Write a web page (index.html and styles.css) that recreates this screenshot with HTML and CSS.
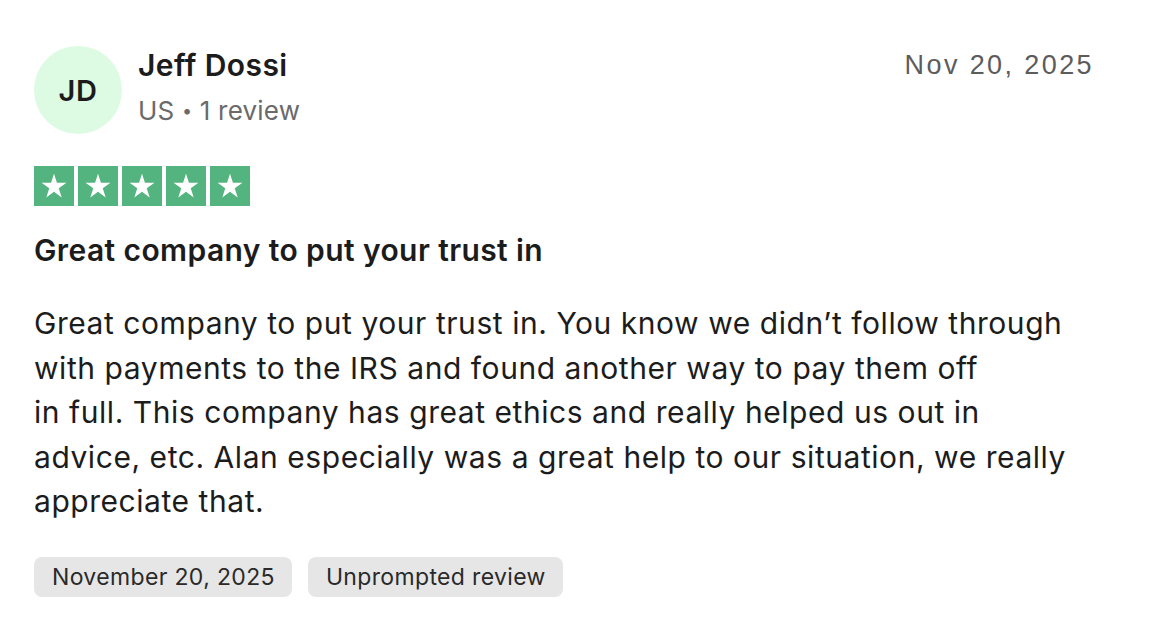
FILE: index.html
```html
<!DOCTYPE html>
<html lang="en">
<head>
<meta charset="utf-8">
<title>Review</title>
<link rel="stylesheet" href="styles.css">
</head>
<body>
<article class="review">
  <header class="review-head">
    <div class="consumer">
      <div class="avatar">JD</div>
      <div class="consumer-info">
        <div class="name">Jeff Dossi</div>
        <div class="meta">US <span class="dot">•</span> 1 review</div>
      </div>
    </div>
    <time class="date">Nov 20, 2025</time>
  </header>

  <div class="stars" aria-label="Rated 5 out of 5">
    <span class="star"><svg viewBox="0 0 24 24"><path d="M12 2.2l2.35 7.2h7.6l-6.15 4.47 2.35 7.23L12 16.63 5.85 21.1l2.35-7.23L2.05 9.4h7.6z" fill="#fff"/></svg></span>
    <span class="star"><svg viewBox="0 0 24 24"><path d="M12 2.2l2.35 7.2h7.6l-6.15 4.47 2.35 7.23L12 16.63 5.85 21.1l2.35-7.23L2.05 9.4h7.6z" fill="#fff"/></svg></span>
    <span class="star"><svg viewBox="0 0 24 24"><path d="M12 2.2l2.35 7.2h7.6l-6.15 4.47 2.35 7.23L12 16.63 5.85 21.1l2.35-7.23L2.05 9.4h7.6z" fill="#fff"/></svg></span>
    <span class="star"><svg viewBox="0 0 24 24"><path d="M12 2.2l2.35 7.2h7.6l-6.15 4.47 2.35 7.23L12 16.63 5.85 21.1l2.35-7.23L2.05 9.4h7.6z" fill="#fff"/></svg></span>
    <span class="star"><svg viewBox="0 0 24 24"><path d="M12 2.2l2.35 7.2h7.6l-6.15 4.47 2.35 7.23L12 16.63 5.85 21.1l2.35-7.23L2.05 9.4h7.6z" fill="#fff"/></svg></span>
  </div>

  <h2 class="title">Great company to put your trust in</h2>

  <p class="text">Great company to put your trust in. You know we didn’t follow through<br>with payments to the IRS and found another way to pay them off<br>in full. This company has great ethics and really helped us out in<br>advice, etc. Alan especially was a great help to our situation, we really<br>appreciate that.</p>

  <div class="tags">
    <span class="tag">November 20, 2025</span>
    <span class="tag">Unprompted review</span>
  </div>
</article>
</body>
</html>
```

FILE: styles.css
```css
html, body {
  margin: 0;
  padding: 0;
  background: #ffffff;
}

body {
  font-family: Inter, "Noto Sans", "Liberation Sans", sans-serif;
  color: #1c1c1c;
}

.review {
  padding: 46px 64px 0 34px;
}

.review-head {
  display: flex;
  justify-content: space-between;
  align-items: flex-start;
}

.consumer {
  display: flex;
  align-items: center;
  gap: 16px;
}

.avatar {
  width: 88px;
  height: 88px;
  border-radius: 50%;
  background: #ddfbe3;
  display: flex;
  align-items: center;
  justify-content: center;
  font-size: 29px;
  font-weight: 600;
  color: #1c1c1c;
  letter-spacing: 0.5px;
}

.consumer-info {
  display: flex;
  flex-direction: column;
  gap: 11px;
  margin-top: -6px;
}

.name {
  font-size: 30px;
  font-weight: 600;
  line-height: 36px;
  letter-spacing: 0.4px;
  color: #1c1c1c;
}

.meta {
  font-size: 26px;
  line-height: 34px;
  color: #6a6a6a;
  letter-spacing: 0.2px;
}

.dot {
  font-size: 18px;
  vertical-align: 3px;
}

.date {
  font-family: "Liberation Sans", Arial, sans-serif;
  font-size: 27px;
  line-height: 36px;
  color: #5c5c5c;
  letter-spacing: 2.4px;
  margin-top: 1px;
}

.stars {
  display: flex;
  gap: 4px;
  margin-top: 32px;
}

.star {
  width: 40px;
  height: 40px;
  background: #54b47f;
  display: flex;
  align-items: center;
  justify-content: center;
}

.star svg {
  width: 30px;
  height: 30px;
  display: block;
}

.title {
  margin: 26px 0 0;
  font-size: 30px;
  font-weight: 600;
  line-height: 36px;
  letter-spacing: 0.4px;
  color: #1c1c1c;
}

.text {
  margin: 33px 0 0;
  font-size: 30px;
  line-height: 44.6px;
  letter-spacing: 0.55px;
  color: #1c1c1c;
}

.tags {
  display: flex;
  gap: 16px;
  margin-top: 33px;
}

.tag {
  display: inline-flex;
  align-items: center;
  height: 40px;
  padding: 0 17px 0 18px;
  border-radius: 8px;
  background: #e6e6e6;
  font-size: 23px;
  letter-spacing: 0.35px;
  color: #2a2a2a;
}
```
